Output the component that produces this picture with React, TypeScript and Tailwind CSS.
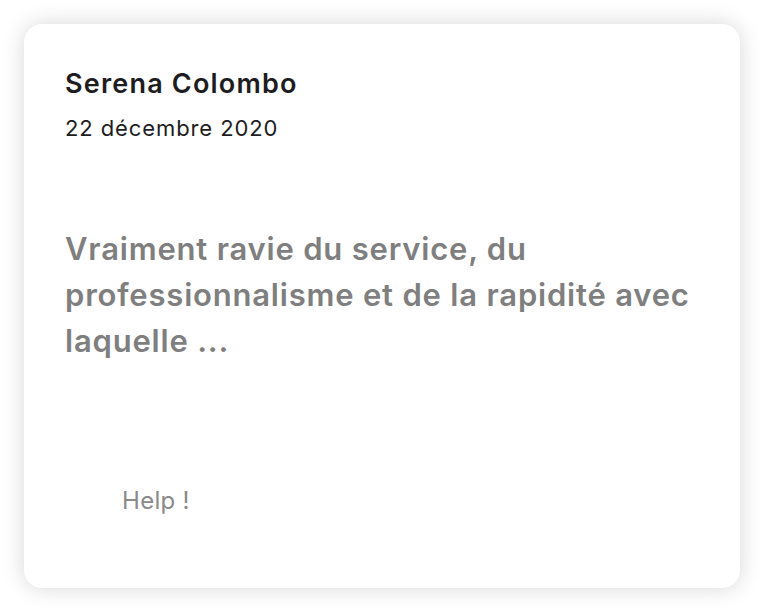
export default function App() {
  return (
    <div className="min-h-screen bg-white p-6 font-['Inter','Noto_Sans',sans-serif]">
      <div className="flex h-[564px] w-[716px] flex-col rounded-[18px] bg-white px-[41px] pt-[43px] shadow-[0_0_22px_rgba(0,0,0,0.16)]">
        <h2 className="text-[27px] font-semibold leading-[33px] tracking-[1.2px] text-[#1d1d1f]">Serena Colombo</h2>
        <p className="mt-[14px] text-[22px] leading-[28px] tracking-[0.9px] text-[#1d1d1f]">22 décembre 2020</p>
        <p className="mt-[84px] text-[31px] font-semibold leading-[46px] tracking-[0.8px] text-[#7f7f7f]">
          Vraiment ravie du service, du professionnalisme et de la rapidité avec laquelle ...
        </p>
        <button className="mt-[122px] self-start pl-[57px] text-[24px] leading-[30px] tracking-[0.3px] text-[#8a8a8a]">Help !</button>
      </div>
    </div>
  );
}
